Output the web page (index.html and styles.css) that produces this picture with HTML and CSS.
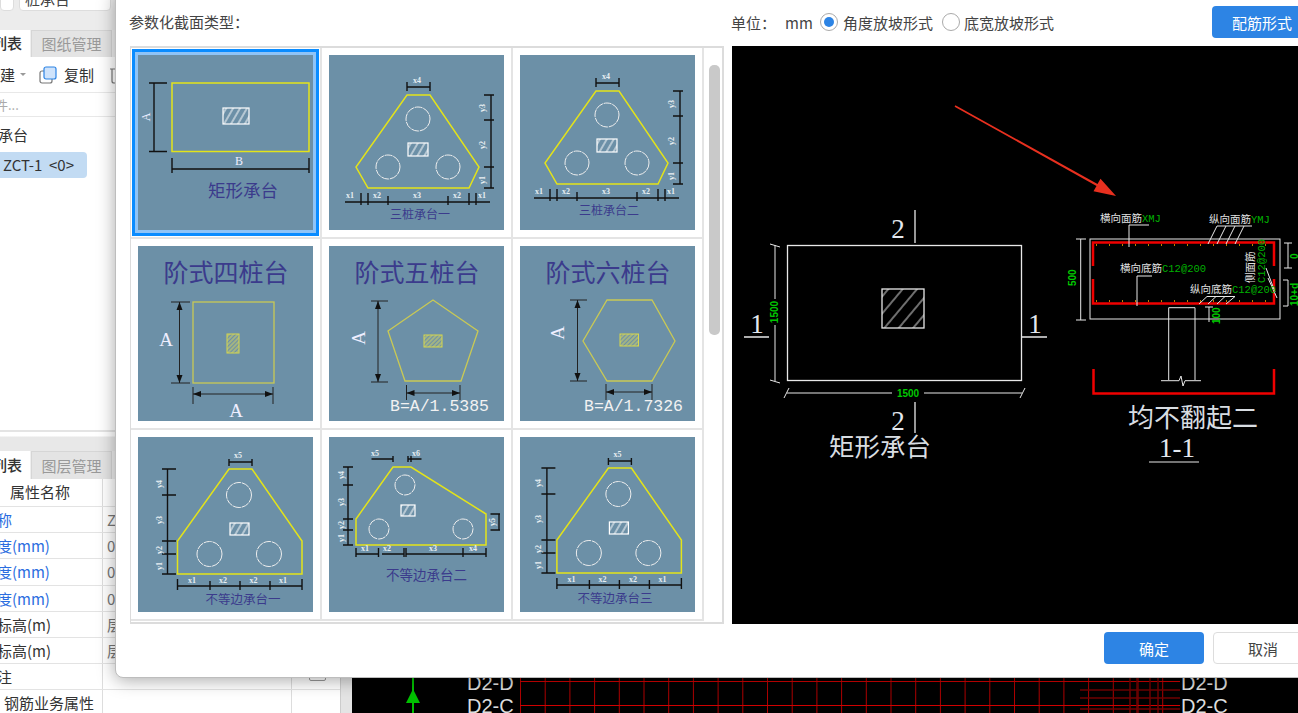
FILE: index.html
```html
<!DOCTYPE html>
<html lang="zh-CN">

<head>
    <meta charset="UTF-8">
    <title>参数化截面类型</title>
    <link rel="stylesheet" href="styles.css">
</head>

<body>
    <div class="app">
        <div class="side">
            <div class="side-top">
                <div class="combo-row">
                    <div class="combo combo-a"></div>
                    <div class="combo combo-b">桩承台</div>
                </div>
                <div class="tabs">
                    <div class="tab active"><span class="cut">构件列表</span></div>
                    <div class="tab">图纸管理</div>
                </div>
                <div class="toolbar">
                    <span class="cut-new">新建</span>
                    <span class="caret"></span>
                    <svg class="copy-icon" width="18" height="18" viewBox="0 0 18 18">
                        <rect x="1" y="5" width="12" height="12" rx="2" fill="#fff" stroke="#777" stroke-width="1.2"/>
                        <rect x="5" y="1" width="12" height="12" rx="2" fill="#cfe3fb" stroke="#2d84e4" stroke-width="1.2"/>
                    </svg>
                    <span class="copy-text">复制</span>
                    <svg class="trash-icon" width="14" height="18" viewBox="0 0 14 18">
                        <path d="M0 3H14M2 3V15Q2 17 4 17H10" fill="none" stroke="#777" stroke-width="1.2"/>
                    </svg>
                </div>
                <div class="search"><span>构件...</span></div>
                <div class="tree-group"><span>桩承台</span></div>
                <div class="tree-item">ZCT-1  &lt;0&gt;</div>
            </div>

            <div class="side-bottom">
                <div class="tabs tabs-low">
                    <div class="tab active"><span class="cut">构件列表</span></div>
                    <div class="tab">图层管理</div>
                </div>
                <div class="prop-row prop-head"><div class="prop-name">属性名称</div><div class="prop-val"></div></div>
                <div class="prop-row"><div class="prop-name cut-name blue">名称</div><div class="prop-val">ZCT-1</div></div>
                <div class="prop-row"><div class="prop-name cut-name blue">长度(mm)</div><div class="prop-val">0</div></div>
                <div class="prop-row"><div class="prop-name cut-name blue">宽度(mm)</div><div class="prop-val">0</div></div>
                <div class="prop-row"><div class="prop-name cut-name blue">高度(mm)</div><div class="prop-val">0</div></div>
                <div class="prop-row"><div class="prop-name cut-name">顶标高(m)</div><div class="prop-val">层底标高</div></div>
                <div class="prop-row"><div class="prop-name cut-name">底标高(m)</div><div class="prop-val">层底标高</div></div>
                <div class="prop-row"><div class="prop-name cut-name">备注</div><div class="prop-val"></div><div class="prop-check"><span class="checkbox"></span></div></div>
                <div class="prop-row"><div class="prop-name rebar-name">钢筋业务属性</div><div class="prop-val"></div></div>
            </div>
        </div>
        <div class="side-strip"></div>

        <div class="canvas">
            <svg width="946" height="713" viewBox="352 0 946 713">
                <defs>
                    <pattern id="red-grid" x="520" width="24.7" height="40" patternUnits="userSpaceOnUse">
                        <line x1="0.5" y1="0" x2="0.5" y2="40" stroke="#b00000"/>
                    </pattern>
                </defs>
                <rect x="520" y="678" width="660" height="35" fill="url(#red-grid)"/>
                <path class="red-line" d="M520 681.5H1180M520 705.5H1180"/>
                <path class="red-dark" d="M1080 690H1180M1080 698H1180M1080 709H1180M1130 678V713M1137 678V713M1150 678V713M1158 678V713"/>
                <path d="M413 678V713" stroke="#00c000" stroke-width="2"/>
                <path d="M413 689L420 703H406Z" fill="#00c000"/>
                <text class="axis" x="467" y="690">D2-D</text>
                <text class="axis" x="467" y="713">D2-C</text>
                <text class="axis" x="1181" y="690">D2-D</text>
                <text class="axis" x="1181" y="713">D2-C</text>
            </svg>
        </div>
    </div>

    <!-- section dialog -->
    <div class="dialog">
        <div class="dialog-main">
            <div class="section-label">参数化截面类型：</div>
            <div class="unit-row">
                <span>单位：</span>
                <span class="unit-mm">mm</span>
                <span class="radio checked"></span>
                <span class="radio-text">角度放坡形式</span>
                <span class="radio second"></span>
                <span class="radio-text second-text">底宽放坡形式</span>
                <button class="btn btn-primary rebar-btn">配筋形式</button>
            </div>

            <div class="shape-list">
                <div class="shape-grid">

                    <div class="shape-cell">
                        <svg class="thumb selected" width="175" height="175" viewBox="0 0 175 175">
                            <defs>
                                <pattern id="hatch" width="6" height="6" patternUnits="userSpaceOnUse" patternTransform="rotate(30)">
                                    <line x1="1" y1="0" x2="1" y2="6" stroke="#fff"/>
                                </pattern>
                                <pattern id="hatch-big" width="11" height="11" patternUnits="userSpaceOnUse" patternTransform="rotate(40)">
                                    <line x1="1" y1="0" x2="1" y2="11" stroke="#ddd"/>
                                </pattern>
                                <pattern id="hatch-y" width="3" height="3" patternUnits="userSpaceOnUse" patternTransform="rotate(45)">
                                    <line x1="1" y1="0" x2="1" y2="3" stroke="#d8d860"/>
                                </pattern>
                            </defs>
                            <rect class="yl" x="34" y="28" width="137" height="68.5"/>
                            <rect class="hatch" x="85" y="53" width="26" height="16"/>
                            <path class="dim" d="M11 28H29M11 96.5H29M16 28V96.5M34 103V118M171 103V118M34 114H171"/>
                            <text class="big-lbl" transform="translate(12,62) rotate(-90)">A</text>
                            <text class="big-lbl" x="101" y="110">B</text>
                            <text class="ttl" x="105" y="142" font-size="17.5">矩形承台</text>
                        </svg>
                    </div>

                    <div class="shape-cell">
                        <svg class="thumb" width="175" height="175" viewBox="0 0 175 175">
                            <g id="tri-pile">
                                <polygon class="yl" points="78,40 101,40 150,112 140,133 39,133 27,112"/>
                                <circle class="pile" cx="89" cy="64" r="12"/>
                                <circle class="pile" cx="59" cy="112" r="12"/>
                                <circle class="pile" cx="119" cy="112" r="12"/>
                                <rect class="hatch" x="79" y="88" width="20" height="13"/>
                                <path class="dim" d="M78 32H101M78 27V36M101 27V36"/>
                                <path class="dim" d="M162 40V133M155 40H165M155 65H165M155 112H165M155 133H165"/>
                                <path class="dim" d="M16 147H161M32 138V150M39 138V150M59 141V150M119 141V150M140 138V150M147 138V150"/>
                                <text class="lbl" x="88" y="28">x4</text>
                                <text class="lbl" transform="translate(156,53) rotate(-90)">y3</text>
                                <text class="lbl" transform="translate(156,90) rotate(-90)">y2</text>
                                <text class="lbl" transform="translate(156,125) rotate(-90)">y1</text>
                                <text class="lbl" x="21" y="143">x1</text>
                                <text class="lbl" x="48" y="143">x2</text>
                                <text class="lbl" x="88" y="143">x3</text>
                                <text class="lbl" x="128" y="143">x2</text>
                                <text class="lbl" x="153" y="143">x1</text>
                            </g>
                            <text class="ttl" x="91" y="164" font-size="12">三桩承台一</text>
                        </svg>
                    </div>

                    <div class="shape-cell">
                        <svg class="thumb" width="175" height="175" viewBox="0 0 175 175">
                            <use href="#tri-pile" transform="translate(-2,-4)"/>
                            <text class="ttl" x="89" y="160" font-size="12">三桩承台二</text>
                        </svg>
                    </div>

                    <div class="shape-cell">
                        <svg class="thumb" width="175" height="175" viewBox="0 0 175 175">
                            <text class="ttl" x="88" y="36" font-size="25">阶式四桩台</text>
                            <rect class="yl-soft" x="55" y="56" width="81" height="81"/>
                            <rect class="hatch-y" x="89" y="88" width="12" height="19"/>
                            <path class="dim thin" d="M33 56H52M33 137H52M41.5 56V137M55 141V158M135 141V158M55 148H135"/>
                            <path class="head" d="M41.5 56L38.5 64H44.5ZM41.5 137L38.5 129H44.5ZM55 148L63 145V151ZM135 148L127 145V151Z"/>
                            <text class="big-lbl serif-a" x="28" y="100">A</text>
                            <text class="big-lbl serif-a" x="98" y="171">A</text>
                        </svg>
                    </div>

                    <div class="shape-cell">
                        <svg class="thumb" width="175" height="175" viewBox="0 0 175 175">
                            <text class="ttl" x="88" y="36" font-size="25">阶式五桩台</text>
                            <polygon class="yl-soft" points="104,54 149,85 132,135 76,135 59,85"/>
                            <rect class="hatch-y" x="95" y="89" width="18" height="12"/>
                            <path class="dim thin" d="M42 55H59M42 136H59M49 55V136M77.5 139V154M131 139V154M77.5 147H131"/>
                            <path class="head" d="M49 55L46 63H52ZM49 136L46 128H52ZM77.5 147L85.5 144V150ZM131 147L123 144V150Z"/>
                            <text class="big-lbl serif-a" transform="translate(36,92) rotate(-90)">A</text>
                            <text class="formula" x="61" y="165">B=A/1.5385</text>
                        </svg>
                    </div>

                    <div class="shape-cell">
                        <svg class="thumb" width="175" height="175" viewBox="0 0 175 175">
                            <text class="ttl" x="88" y="36" font-size="25">阶式六桩台</text>
                            <polygon class="yl-soft" points="87,54 132,54 155,95 132,135 87,135 63,95"/>
                            <rect class="hatch-y" x="100" y="88" width="18.5" height="12"/>
                            <path class="dim thin" d="M50 54H67M50 135H67M57.5 54V135M86 138V154M132 138V154M86 146H132"/>
                            <path class="head" d="M57.5 54L54.5 62H60.5ZM57.5 135L54.5 127H60.5ZM86 146L94 143V149ZM132 146L124 143V149Z"/>
                            <text class="big-lbl serif-a" transform="translate(44,87) rotate(-90)">A</text>
                            <text class="formula" x="64" y="165">B=A/1.7326</text>
                        </svg>
                    </div>

                    <div class="shape-cell">
                        <svg class="thumb" width="175" height="175" viewBox="0 0 175 175">
                            <g id="uneven-pile">
                                <polygon class="yl" points="91,32 114,32 164,104 164,137 39.5,137 39.5,104"/>
                                <circle class="pile" cx="101" cy="58" r="12.5"/>
                                <circle class="pile" cx="71.5" cy="117" r="12.5"/>
                                <circle class="pile" cx="131" cy="117" r="12.5"/>
                                <rect class="hatch" x="92" y="86" width="19" height="12"/>
                                <path class="dim" d="M91 25H114M91 22V29M114 22V29"/>
                                <path class="dim" d="M29.5 32V137M24 32H38M24 58H38M24 104H38M24 117H38M24 137H38"/>
                                <path class="dim" d="M39.5 149H164M39.5 142V153M72 144V153M102 144V153M132 144V153M164 142V153"/>
                                <text class="lbl" x="100" y="21">x5</text>
                                <text class="lbl" transform="translate(24,47) rotate(-90)">y4</text>
                                <text class="lbl" transform="translate(24,83) rotate(-90)">y3</text>
                                <text class="lbl" transform="translate(24,113) rotate(-90)">y2</text>
                                <text class="lbl" transform="translate(24,129) rotate(-90)">y1</text>
                                <text class="lbl" x="54" y="146">x1</text>
                                <text class="lbl" x="85" y="146">x2</text>
                                <text class="lbl" x="115.5" y="146">x2</text>
                                <text class="lbl" x="145" y="146">x1</text>
                            </g>
                            <text class="ttl" x="105" y="167" font-size="12.5">不等边承台一</text>
                        </svg>
                    </div>

                    <div class="shape-cell">
                        <svg class="thumb" width="175" height="175" viewBox="0 0 175 175">
                            <polygon class="yl" points="64,30 82,30 157,77 157,108 27,108 27,82"/>
                            <circle class="pile" cx="76" cy="48" r="10"/>
                            <circle class="pile" cx="50" cy="92" r="10"/>
                            <circle class="pile" cx="134" cy="92" r="10"/>
                            <rect class="hatch" x="72" y="68" width="14" height="11"/>
                            <path class="dim" d="M42.5 22H64M64 19V25M79 19V25M82 19V25M79 22H92.5"/>
                            <path class="dim" d="M19 30V108M14 30H24M14 48H24M14 82H24M14 93H24M14 108H24"/>
                            <path class="dim" d="M170 77V93M161.5 77H171M161.5 93H171"/>
                            <path class="dim" d="M27 117H49.5M53 117H75M77 117H134M134 117H157M27 111V120M49.5 111V120M75 111V120M77 111V120M134 111V120M157 111V120"/>
                            <text class="lbl" x="46" y="19">x5</text>
                            <text class="lbl" x="87" y="19">x6</text>
                            <text class="lbl" transform="translate(15,38) rotate(-90)">y4</text>
                            <text class="lbl" transform="translate(15,65) rotate(-90)">y3</text>
                            <text class="lbl" transform="translate(15,88) rotate(-90)">y2</text>
                            <text class="lbl" transform="translate(15,101) rotate(-90)">y1</text>
                            <text class="lbl" transform="translate(166,85) rotate(-90)">y5</text>
                            <text class="lbl" x="36" y="114">x1</text>
                            <text class="lbl" x="58" y="114">x2</text>
                            <text class="lbl" x="104" y="114">x3</text>
                            <text class="lbl" x="144" y="114">x4</text>
                            <text class="ttl" x="97.5" y="143" font-size="13.5">不等边承台二</text>
                        </svg>
                    </div>

                    <div class="shape-cell">
                        <svg class="thumb" width="175" height="175" viewBox="0 0 175 175">
                            <use href="#uneven-pile" transform="translate(-2.6,-1)"/>
                            <text class="ttl" x="95" y="166" font-size="12.5">不等边承台三</text>
                        </svg>
                    </div>
                </div>
                <div class="list-scroll"><div class="scroll-thumb"></div></div>
            </div>

            <div class="preview">
                <svg width="566" height="578" viewBox="0 0 566 578">
                    <!-- red arrow -->
                    <polygon fill="#e8301f" points="222.6,60.7 223.4,59.3 365.5,138 368.5,132.8 384,150 361.5,145.2 364.5,139.9"/>

                    <!-- plan -->
                    <rect class="cad" x="55.5" y="199.5" width="234" height="135"/>
                    <rect class="cad-hatch" x="150" y="243" width="42" height="39"/>
                    <path class="cad" d="M183 164V197M183 356V387M12 291H37M290 291H315"/>
                    <path class="cad thin" d="M43 199V253M43 279V335M38 198L48 201M38 334L48 337M55 347H160M192 347H290M52 352L57 342M288 352L293 342"/>
                    <text class="cad-num" x="166" y="192">2</text>
                    <text class="cad-num" x="166" y="384">2</text>
                    <text class="cad-num" x="25" y="287">1</text>
                    <text class="cad-num" x="303" y="287">1</text>
                    <text class="green" transform="translate(46,266) rotate(-90)" text-anchor="middle">1500</text>
                    <text class="green" x="176" y="351" text-anchor="middle">1500</text>
                    <text class="cad-title" x="148" y="410">矩形承台</text>

                    <!-- section -->
                    <rect class="cad thin" x="358" y="193" width="190" height="80"/>
                    <path class="rebar" d="M361 220V196.5H542V220M361 233V257.5H542V233"/>
                    <path class="rebar-dots" d="M364 199H540M364 255H540"/>
                    <path class="rebar" d="M361.5 323V347.5H542V323"/>
                    <path class="cad thin" d="M417 179H397V201M420 230H405V260M485 180H520M485 180L476 198M494 180L485 198M503 180L494 198M512 180L503 198M475 250.5H503M475 250.5L467 258M484 250.5L476 258M493 250.5L485 258M503 250.5L494 258M534 222L543 246M536 232L545 252"/>
                    <path class="cad thin" d="M348.7 193V274M344 193H354M344 274H354M477 261V276M473 261H481M556 197V222M552 197H560M552 222H560M551 234H556V260H551"/>
                    <path class="cad thin" d="M436.7 334V261.7H463V334M429 334.7H447L449 330L451 340L453 334.7H469"/>
                    <text class="cad-note" x="368" y="176">横向面筋<tspan class="green-span">XMJ</tspan></text>
                    <text class="cad-note" x="477" y="177">纵向面筋<tspan class="green-span">YMJ</tspan></text>
                    <text class="cad-note" x="388" y="226">横向底筋<tspan class="green-span">C12@200</tspan></text>
                    <text class="cad-note" x="458" y="247">纵向底筋<tspan class="green-span">C12@200</tspan></text>
                    <text class="cad-note" transform="translate(522,237) rotate(-90)">侧面筋</text>
                    <text class="green-span cad-note" transform="translate(533,237) rotate(-90)">C12@200</text>
                    <text class="green" transform="translate(344,240) rotate(-90)">500</text>
                    <text class="green" transform="translate(488,278) rotate(-90)">100</text>
                    <text class="green" transform="translate(566,213) rotate(-90)">0</text>
                    <text class="green" transform="translate(566,260) rotate(-90)">10+d</text>
                    <text class="cad-title wide" x="461" y="381">均不翻起二</text>
                    <text class="cad-num" x="445" y="411">1-1</text>
                    <path class="cad thin" d="M417 416H467"/>
                </svg>
            </div>
        </div>

        <div class="dialog-foot">
            <button class="btn btn-primary">确定</button>
            <button class="btn btn-cancel">取消</button>
        </div>
    </div>
</body>

</html>
```

FILE: styles.css
```css
html,
body {
    margin: 0;
    padding: 0;
    height: 100%;
    overflow: hidden;
    background: #fff;
    font-family: "Noto Sans CJK SC", "Noto Sans", sans-serif;
    font-size: 15px;
    color: #444;
}

.app {
    display: flex;
    width: 1298px;
    height: 713px;
}

/* left panels behind the dialog */
.side {
    width: 340px;
    flex-shrink: 0;
    display: flex;
    flex-direction: column;
    overflow: hidden;
}

.side-strip {
    width: 12px;
    background: #e4e4e4;
    border-left: 1px solid #ccc;
    box-sizing: border-box;
}

.side-top {
    height: 432px;
    flex-shrink: 0;
    border-bottom: 2px solid #e4e4e4;
    box-sizing: border-box;
}

.combo-row {
    display: flex;
    height: 12px;
    padding-bottom: 18px;
    background: #ececec;
    overflow: hidden;
}

.combo {
    height: 24px;
    margin-top: -13px;
    background: #fff;
    border: 1px solid #ddd;
    border-radius: 4px;
    box-sizing: border-box;
    line-height: 22px;
}

.combo-a {
    width: 14px;
    margin-right: 5px;
}

.combo-b {
    width: 92px;
    padding-left: 5px;
}

.tabs {
    display: flex;
    height: 27px;
    background: #efefef;
}

.tabs-low {
    height: 28px;
    line-height: 29px;
}

.tab {
    width: 81px;
    margin-left: 1px;
    background: #e4e4e4;
    border: 1px solid #d6d6d6;
    border-bottom: none;
    box-sizing: border-box;
    text-align: center;
    line-height: 26px;
    color: #999;
}

.tabs-low .tab {
    line-height: 28px;
}

.tab.active {
    width: 30px;
    margin-left: 0;
    background: #fff;
    color: #333;
    overflow: hidden;
    white-space: nowrap;
    border: none;
    text-align: left;
}

.tab .cut {
    margin-left: -38px;
    display: inline-block;
    font-weight: 500;
}

.toolbar {
    display: flex;
    align-items: center;
    height: 35px;
    border-bottom: 1px solid #e8e8e8;
    color: #333;
    white-space: nowrap;
}

.cut-new {
    margin-left: -15px;
}

.caret {
    width: 0;
    height: 0;
    margin-left: 5px;
    border-left: 3px solid transparent;
    border-right: 3px solid transparent;
    border-top: 3px solid #999;
}

.copy-icon {
    margin-left: 13px;
}

.copy-text {
    margin-left: 7px;
}

.trash-icon {
    margin-left: 16px;
}

.search {
    height: 23px;
    line-height: 23px;
    border-bottom: 1px solid #e8e8e8;
    color: #aaa;
    font-size: 13px;
}

.search span {
    margin-left: -18px;
}

.tree-group {
    margin-top: 5px;
    height: 26px;
    line-height: 26px;
    color: #333;
}

.tree-group span {
    margin-left: -17px;
}

.tree-item {
    width: 87px;
    height: 26px;
    line-height: 26px;
    margin-top: 4px;
    padding-left: 3px;
    box-sizing: border-box;
    background: #c2dbf3;
    border-radius: 0 4px 4px 0;
    white-space: pre;
    color: #333;
}

.side-bottom {
    flex: 1;
    padding-top: 19px;
    background: linear-gradient(#fff 4px, #e8e8e8 5px);
}

.prop-row {
    display: flex;
    height: 26.2px;
    line-height: 26px;
    background: #fff;
    border-bottom: 1px solid #e3e3e3;
    box-sizing: border-box;
    white-space: nowrap;
}

.prop-head {
    height: 28px;
}

.prop-name {
    width: 103px;
    flex-shrink: 0;
    border-right: 1px solid #ddd;
    box-sizing: border-box;
    color: #333;
}

.prop-head .prop-name {
    padding-left: 10px;
}

.cut-name {
    text-indent: -18px;
}

.blue {
    color: #2b6de0;
}

.rebar-name {
    padding-left: 4px;
}

.prop-val {
    width: 189px;
    flex-shrink: 0;
    padding-left: 4px;
    box-sizing: border-box;
    border-right: 1px solid #ddd;
    color: #777;
}

.prop-check {
    padding-left: 17px;
}

.checkbox {
    display: block;
    width: 17px;
    height: 14px;
    margin-top: 3px;
    border: 1px solid #999;
    border-radius: 2px;
    box-sizing: border-box;
}

.canvas {
    flex: 1;
    background: #000;
    overflow: hidden;
}

.canvas svg {
    display: block;
}

.red-line {
    stroke: #d00000;
    stroke-width: 1;
}

.red-dark {
    stroke: #700000;
    stroke-width: 1.5;
}

.axis {
    fill: #ddd;
    font-family: "Liberation Sans", sans-serif;
    font-size: 20px;
}

/* dialog */
.dialog {
    position: absolute;
    left: 115px;
    top: -10px;
    width: 1235px;
    height: 688px;
    padding: 15px 36px 0 14px;
    box-sizing: border-box;
    background: #fff;
    border: 1px solid #bdbdbd;
    border-radius: 8px;
    box-shadow: 0 2px 18px rgba(0, 0, 0, 0.35);
}

.dialog-main {
    display: grid;
    grid-template-columns: 594px 1fr;
    grid-template-rows: 32px 578px;
    column-gap: 8px;
    row-gap: 8px;
}

.section-label {
    line-height: 32px;
    margin-left: -1px;
}

.unit-row {
    display: flex;
    align-items: center;
    white-space: nowrap;
    margin-left: -1px;
}

.unit-mm {
    margin-left: 9px;
    width: 35px;
}

.radio {
    width: 18px;
    height: 18px;
    border: 1px solid #aaa;
    border-radius: 50%;
    box-sizing: border-box;
    background: #fff;
    position: relative;
}

.radio.checked::after {
    content: "";
    position: absolute;
    left: 3px;
    top: 3px;
    width: 10px;
    height: 10px;
    border-radius: 50%;
    background: #2d84e4;
}

.radio-text {
    margin-left: 5px;
}

.radio.second {
    margin-left: 9px;
}

.second-text {
    margin-left: 4px;
}

.btn {
    width: 100px;
    height: 32px;
    border: none;
    border-radius: 4px;
    font-family: inherit;
    font-size: 15px;
    padding: 0;
}

.btn-primary {
    background: #2d84e4;
    color: #fff;
}

.btn-cancel {
    background: #fff;
    border: 1px solid #ddd;
    color: #444;
}

.rebar-btn {
    margin-left: auto;
    margin-right: 1px;
}

.shape-list {
    display: flex;
    height: 578px;
    border: 2px solid #dcdcdc;
    border-left-width: 1px;
    box-sizing: border-box;
    overflow: hidden;
}

.shape-grid {
    display: grid;
    grid-template-columns: repeat(3, 191px);
    grid-auto-rows: 191px;
    width: 573px;
    flex-shrink: 0;
}

.shape-cell {
    padding: 7px;
    border-right: 2px solid #e4e4e4;
    border-bottom: 2px solid #e4e4e4;
    box-sizing: border-box;
}

.thumb {
    display: block;
    background: #6c90a7;
}

.thumb.selected {
    box-shadow: 0 0 0 3px #8fc4f7, 0 0 0 6px #0a8cff;
}

.list-scroll {
    flex: 1;
    padding: 17px 0 0 5px;
}

.scroll-thumb {
    width: 11px;
    height: 270px;
    background: #c9c9c9;
    border-radius: 5px;
}

.preview {
    background: #000;
    height: 578px;
    overflow: hidden;
}

.preview svg {
    display: block;
}

.dialog-foot {
    display: flex;
    justify-content: flex-end;
    gap: 9px;
    margin-top: 8px;
}

/* thumbnail drawings */
.yl {
    fill: none;
    stroke: #e3e31a;
    stroke-width: 1.5;
}

.yl-soft {
    fill: none;
    stroke: #c9c955;
    stroke-width: 1.3;
}

.dim {
    fill: none;
    stroke: #111;
    stroke-width: 1.4;
}

.dim.thin {
    stroke: #222;
    stroke-width: 1;
}

.head {
    fill: #111;
}

.pile {
    fill: none;
    stroke: #eee;
    stroke-width: 1;
    stroke-dasharray: 8 0.8;
}

.hatch {
    fill: url(#hatch);
    stroke: #fff;
    stroke-width: 1.2;
}

.hatch-y {
    fill: url(#hatch-y);
    stroke: #d8d84a;
    stroke-width: 1;
}

.lbl {
    fill: #e8eef2;
    font-family: "Liberation Serif", serif;
    font-size: 8px;
    font-weight: bold;
    text-anchor: middle;
}

.big-lbl {
    fill: #eef;
    font-family: "Liberation Serif", serif;
    font-size: 12px;
    text-anchor: middle;
}

.big-lbl.serif-a {
    font-size: 19px;
}

.ttl {
    fill: #3b3b8c;
    text-anchor: middle;
}

.formula {
    fill: #f2f2f2;
    font-family: "Liberation Mono", monospace;
    font-size: 16.5px;
}

/* preview drawing */
.cad {
    fill: none;
    stroke: #e8e8e8;
    stroke-width: 1.3;
}

.cad.thin {
    stroke-width: 1;
}

.cad-hatch {
    fill: url(#hatch-big);
    stroke: #e8e8e8;
    stroke-width: 1.3;
}

.cad-num {
    fill: #e4e8ee;
    font-family: "Liberation Serif", serif;
    font-size: 27px;
    text-anchor: middle;
}

.cad-title {
    fill: #d8dde2;
    font-size: 25.5px;
    text-anchor: middle;
}

.cad-title.wide {
    font-size: 26px;
}

.green {
    fill: #00c800;
    font-family: "Liberation Sans", sans-serif;
    font-size: 10px;
    font-weight: bold;
}

.cad-note {
    fill: #e0e0e0;
    font-size: 10.5px;
}

.green-span {
    fill: #00b000;
    font-family: "Liberation Mono", monospace;
    font-size: 10.5px;
}

.rebar {
    fill: none;
    stroke: #f00000;
    stroke-width: 2.5;
}

.rebar-dots {
    fill: none;
    stroke: #c08000;
    stroke-width: 2;
    stroke-dasharray: 1 12;
}
```
